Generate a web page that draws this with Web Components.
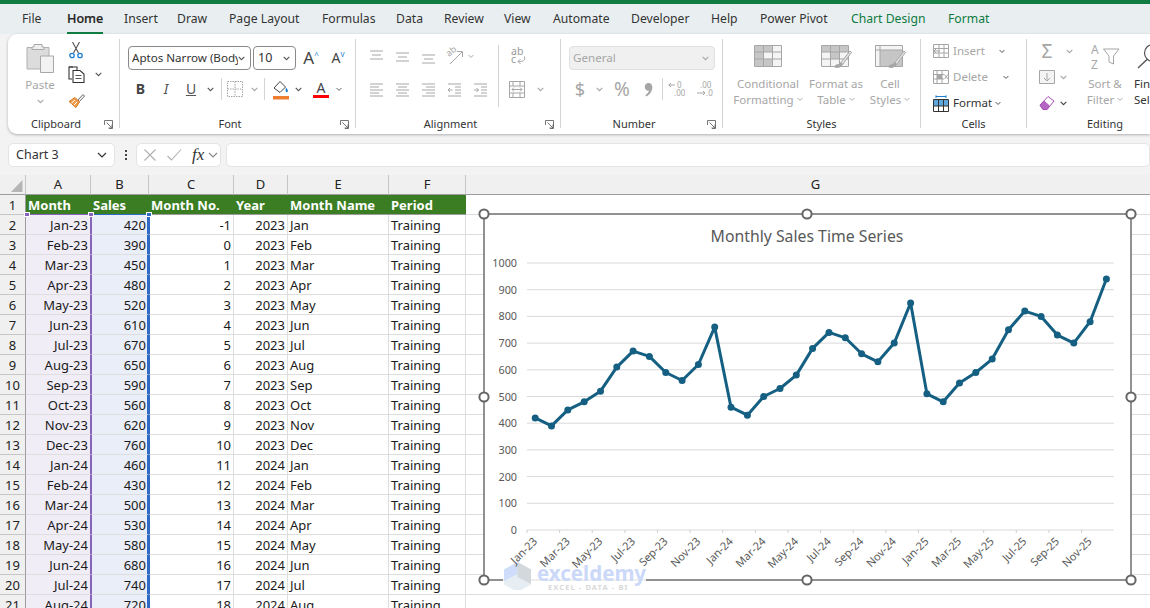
<!DOCTYPE html>
<html lang="en"><head><meta charset="utf-8"><title>Excel</title>
<style>
html,body{margin:0;padding:0;width:1150px;height:608px;overflow:hidden;background:#f3f3f3;font-family:"Noto Sans","Open Sans",sans-serif}
</style></head><body>
<x-tabs></x-tabs>
<x-ribbon></x-ribbon>
<x-formula></x-formula>
<x-sheet></x-sheet>
<script>
const G='#a6a6a6',D='#404040';
const chev=(c='#555',w=7)=>`<svg width="${w}" height="5" viewBox="0 0 7 5" fill="none" stroke="${c}" stroke-width="1.1"><path d="M.7 .8 3.5 3.6 6.3 .8"/></svg>`;
const svg=(w,h,b)=>`<svg width="${w}" height="${h}" viewBox="0 0 ${w} ${h}" fill="none">${b}</svg>`;
const I={
 paste:svg(28,30,`<path d="M1 4.5H23V26H1Z" fill="#dcdcdc" stroke="#b0b0b0"/><path d="M8 4V1.5H16V4H18V6.5H6V4Z" fill="#f0f0f0" stroke="#a8a8a8"/><path d="M14.5 13H27.5V29.5H14.5Z" fill="#f2f2f2" stroke="#a8a8a8"/>`),
 cut:svg(14,17,`<path d="M3.5 0 9.5 11M10.5 0 4.5 11" stroke="#555" stroke-width="1.1"/><circle cx="3" cy="13.5" r="2.2" stroke="#1f7fd1" stroke-width="1.3"/><circle cx="11" cy="13.5" r="2.2" stroke="#1f7fd1" stroke-width="1.3"/>`),
 copy:svg(17,17,`<path d="M5 1H1V13H4" stroke="#333" stroke-width="1.1"/><path d="M1 1H9V4" stroke="#333" stroke-width="1.1"/><path d="M5 4.5H12L16 8V16.5H5Z" fill="#fff" stroke="#333" stroke-width="1.1"/><path d="M7.5 9.5H13.5M7.5 12.5H13.5" stroke="#555"/>`),
 brush:svg(17,16,`<path d="M10 8 15 2.5 16.5 4 11.5 9.5Z" fill="#fff" stroke="#666"/><path d="M1 9.5 7 5.5 11.5 10 8 15.5Z" fill="#ed9b4c" stroke="#d87a22"/><path d="M3.5 11 7 8M6 13 9 10" stroke="#fff"/>`),
 borders:svg(16,16,`<path d="M.5 .5H15.5V15.5H.5ZM8 .5V15.5M.5 8H15.5" stroke="${G}" stroke-dasharray="1.5 1"/>`),
 fill:svg(18,21,`<path d="M2 9 8 2.5 13.5 8 8 13.5Z" fill="#fff" stroke="#444"/><path d="M14 8.5C16 10.5 16.5 12 15.3 13 14 13.8 13 12.5 14 8.5Z" fill="#1f7fd1"/><path d="M1 17H17V20.5H1Z" fill="#ed7d31"/>`),
 orient:svg(20,18,`<text x="4" y="9" font-size="9" fill="${G}" font-family="Noto Sans" transform="rotate(-40 6 8)">ab</text><path d="M6 17 18 5M13 4.5H18.5V10" stroke="${G}"/>`),
 wrap:svg(18,18,`<text x="2" y="8" font-size="10.5" fill="#999" font-family="Noto Sans">ab</text><text x="2" y="16" font-size="10.5" fill="#999" font-family="Noto Sans">c</text><path d="M15.5 9.5C16.5 14 14 14.5 9 14.5M11.5 12 9 14.5 11.5 17" stroke="${G}"/>`),
 merge:svg(16,17,`<path d="M.5 .5H15.5V16.5H.5ZM.5 5H15.5M.5 12H15.5M4 .5V5M11 .5V5M4 12V16.5M11 12V16.5" stroke="${G}"/><path d="M3 8.5H13M5 6.5 3 8.5 5 10.5M11 6.5 13 8.5 11 10.5" stroke="${G}"/>`),
 dec1:svg(17,16,`<text x="9" y="7" font-size="8" fill="${G}" font-family="Noto Sans">0</text><text x="6" y="15" font-size="8" fill="${G}" font-family="Noto Sans">.00</text><path d="M7 4H.8M3 2 .8 4 3 6" stroke="${G}"/>`),
 dec2:svg(17,16,`<text x="4" y="7" font-size="8" fill="${G}" font-family="Noto Sans">.00</text><text x="10" y="15" font-size="8" fill="${G}" font-family="Noto Sans">.0</text><path d="M1 12H9M7 10 9 12 7 14" stroke="${G}"/>`),
 comma:svg(9,15,`<path d="M4.5 1C7 1 8.3 2.8 8.3 5.2 8.3 9 6 12.5 2.3 14.5L1.4 13.2C3.4 11.8 4.6 10.3 5 8.6 2.6 9 .8 7.3.8 5 .8 2.6 2.4 1 4.5 1Z" fill="${G}"/>`),
 cf:svg(29,22,`<path d="M.5 .5H27.5V21.5H.5Z" fill="#f4f4f4" stroke="${G}"/><path d="M1 1H18V7H1ZM1 7H9V14H1ZM1 14H19V21H1Z" fill="#c6c6c6"/><path d="M.5 7H27.5M.5 14H27.5M9.5 .5V21.5M18.5 .5V21.5" stroke="${G}"/>`),
 ft:svg(31,24,`<path d="M.5 .5H27.5V21.5H.5Z" fill="#f4f4f4" stroke="${G}"/><path d="M1 1H27V7H1ZM9 7H18V14H9Z" fill="#c6c6c6"/><path d="M.5 7H27.5M.5 14H27.5M9.5 .5V21.5M18.5 .5V21.5" stroke="${G}"/><path d="M15 20C20 20 20 17 22 15L29 6 30.5 7.5 24 16C22 20 19 23 14 22Z" fill="#e4e4e4" stroke="${G}"/><path d="M14 20.5C17 20 18 19 20 17L22 19C19 23 17 23.5 13 22Z" fill="#a6a6a6"/>`),
 cs:svg(31,24,`<path d="M.5 .5H27.5V21.5H.5Z" fill="#f4f4f4" stroke="${G}"/><path d="M5 5H27V21H5Z" fill="#c6c6c6"/><path d="M.5 5H27.5M5 .5V21.5" stroke="${G}"/><path d="M15 20C20 20 20 17 22 15L29 6 30.5 7.5 24 16C22 20 19 23 14 22Z" fill="#e4e4e4" stroke="${G}"/><path d="M14 20.5C17 20 18 19 20 17L22 19C19 23 17 23.5 13 22Z" fill="#a6a6a6"/>`),
 ins:svg(16,14,`<path d="M.5 .5H15.5V13.5H.5ZM.5 4.5H15.5M.5 9H15.5M6 .5V13.5M11 .5V13.5" stroke="${G}"/><path d="M1 7H7M3.5 4.5 1 7 3.5 9.5" stroke="${G}" fill="#fff"/>`),
 del:svg(16,14,`<path d="M.5 .5H15.5V13.5H.5ZM.5 4.5H11M.5 9H11M4 .5V13.5M9 .5V13.5" stroke="${G}"/><path d="M4 4.5H9V9H4Z" fill="#a6a6a6"/><path d="M11.5 4.5 15 9M15 4.5 11.5 9" stroke="${G}"/>`),
 fmt:svg(16,17,`<path d="M.5 4.5H15.5V16.5H.5Z" fill="#fff" stroke="#333"/><path d="M1 5H15V11H1Z" fill="#5fa8de"/><path d="M.5 11H15.5M5.5 4.5V16.5M10.5 4.5V16.5" stroke="#333"/><path d="M3 1.5H13M3 .3V3M13 .3V3" stroke="#1f7fd1"/>`),
 filld:svg(16,14,`<path d="M.5 .5H15.5V13.5H.5Z" fill="#f4f4f4" stroke="${G}"/><path d="M8 3V11M5 8 8 11 11 8" stroke="${G}"/>`),
 erase:svg(16,16,`<path d="M1 10 9 1.5 15 6 8 14.5H4Z" fill="#fff" stroke="#a94fb5"/><path d="M1 10 5 6 10.5 11 8 14.5H4Z" fill="#b565c4" stroke="#a94fb5"/>`),
 sort:svg(29,27,`<text x="0" y="11" font-size="12" fill="${G}" font-family="Noto Sans">A</text><text x="0" y="26" font-size="12" fill="${G}" font-family="Noto Sans">Z</text><path d="M12.5 6H28L22.5 13V21L18 19V13Z" fill="#fff" stroke="${G}"/>`),
 find:svg(26,28,`<circle cx="16" cy="10" r="8.5" stroke="#555" stroke-width="1.2" fill="#fff"/><path d="M10 16.5 1 25" stroke="#555" stroke-width="1.4"/>`),
 launch:svg(9,9,`<path d="M.5 5V.5H8.5V8.5H5M2.5 2.5 8 8M8 4.5V8H4.5" stroke="#666" stroke-width=".9"/>`),
};

class XTabs extends HTMLElement{constructor(){super();const s=this.attachShadow({mode:'open'});
 const t=[['File',45],['Home',57,'on'],['Insert',53],['Draw',52],['Page Layout',93],['Formulas',74],['Data',48],['Review',60],['View',49],['Automate',78],['Developer',80],['Help',49],['Power Pivot',91],['Chart Design',97,'gr'],['Format',41,'gr']];
 s.innerHTML=`<style>:host{display:flex;box-sizing:border-box;height:34px;border-top:4px solid #107c41;background:#e9eff1;padding-left:22px;font:12.2px/30px "Noto Sans",sans-serif;color:#333}
 .t{display:block;flex:none;height:30px;white-space:nowrap}.t span{display:inline-block;height:30px;box-sizing:border-box}
 .on span{font-size:12.6px;color:#222;font-weight:500;border-bottom:2px solid #107c41;-webkit-text-stroke:.2px #222}.gr{color:#0e7a3e}</style>`+t.map(a=>`<div class="t ${a[2]||''}" style="width:${a[1]}px"><span>${a[0]}</span></div>`).join('');}}
customElements.define('x-tabs',XTabs);

class RGroup extends HTMLElement{constructor(){super();this.attachShadow({mode:'open'});}
 connectedCallback(){const w=this.getAttribute('w'),l=this.getAttribute('label'),p=this.hasAttribute('launcher');
 this.shadowRoot.innerHTML=`<style>:host{display:flex;flex-direction:column;box-sizing:border-box;flex:none;height:89px;width:${w}px;border-right:1px solid #d4d4d4}
 .c{height:75px;flex:none}.f{display:flex;height:14px;line-height:20px;font-size:11px;color:#333}.l{flex:1;text-align:center}
 .p{width:15px;padding-top:6px;box-sizing:border-box;line-height:0}</style><div class="c"><slot></slot></div><div class="f"><span class="l">${l}</span>${p?`<span class="p">${I.launch}</span>`:''}</div>`;}}
customElements.define('r-group',RGroup);

class XRibbon extends HTMLElement{constructor(){super();const s=this.attachShadow({mode:'open'});
 const c=(w,h,st='')=>`<span class="k" style="width:${w}px;${st}">${h}</span>`;
 const t=(x,st='')=>`<span style="font-size:15px;color:${G};${st}">${x}</span>`;
 const ln=(a)=>svg(15,15,a.map((g,i)=>`<path d="M${g[0]} ${g[1]}H${g[2]}" stroke="${G}"/>`).join(''));
 const big=(w,ic,a,b)=>`<div class="big" style="width:${w}px"><div class="bi">${ic}</div><div>${a}</div><div class="b2">${b} ${chev(G,6)}</div></div>`;
 s.innerHTML=`<style>:host{display:flex;box-sizing:border-box;width:1142px;height:100px;margin-left:8px;padding-top:5px;overflow:hidden;background:#fff;border-radius:9px 0 0 9px;box-shadow:0 1px 3px rgba(0,0,0,.28);font:11.5px/16px "Noto Sans",sans-serif;color:${G}}
 .row{display:flex;align-items:center;height:22px}.k{display:flex;align-items:center;justify-content:center;flex:none;height:100%}
 .sep{flex:none;width:1px;background:#d4d4d4}.hsep{width:1px;height:22px;background:#d4d4d4;flex:none}
 .sel{box-sizing:border-box;display:flex;align-items:center;height:24px;border:1px solid #8a8a8a;border-radius:4px;padding:0 5px 0 3px;color:#333;font-size:11.6px;overflow:hidden;white-space:nowrap;flex:none}
 .sel b{font-weight:400;overflow:hidden;flex:1}.dark{color:#333}
 .big{text-align:center;flex:none;line-height:16px;white-space:nowrap}.bi{height:37px;padding-top:6px;box-sizing:border-box;line-height:0}.b2 svg{vertical-align:2px}
 .flex{display:flex}.tall{height:24px;display:flex;align-items:center;margin-bottom:2px;white-space:nowrap}</style>

 <r-group w="112" label="Clipboard" launcher><div class="flex">
  <div style="margin-left:14px;width:36px;text-align:center;padding-top:4px"><div style="line-height:0">${I.paste}</div><div style="margin-top:4px">Paste</div><div style="line-height:0;margin-top:6px">${chev(G)}</div></div>
  <div style="margin-left:3px"><div class="row" style="width:50px"><span class="k" style="width:30px">${I.cut}</span></div><div class="row" style="height:26px">${c(30,I.copy)}${c(14,chev(),'margin-left:0')}</div><div class="row" style="height:25px">${c(30,I.brush)}</div></div>
 </div></r-group>

 <r-group w="236" label="Font" launcher><div style="padding:7px 0 0 8px">
  <div class="row" style="height:24px"><span class="sel" style="width:123px"><b>Aptos Narrow (Body)</b>${chev()}</span><span class="sel" style="width:43px;margin-left:2px;padding-left:4px"><b style="font-size:12.5px">10</b>${chev()}</span>
   ${c(36,`<span style="font-size:17px;color:#444">A<sup style="font-size:8px;color:#1f7fd1;vertical-align:6px;line-height:0">^</sup></span>`,'margin-left:-3px')}${c(16,`<span style="font-size:14px;color:#444">A</span><span style="font-size:8px;color:#1f7fd1;margin-top:-8px">v</span>`,'margin-left:1px')}</div>
  <div class="row" style="margin-top:8px;color:#444">${c(25,`<b style="font-size:14px">B</b>`)}${c(26,`<i style="font-size:14px;color:#555">I</i>`)}${c(24,`<u style="font-size:14px;color:#555">U</u>`)}${c(14,chev())}${c(8,'')}
   <span class="hsep" style="margin-left:-4px;margin-right:3px"></span>${c(20,I.borders)}${c(18,chev(G))}<span class="hsep" style="margin-left:1px;margin-right:3px"></span>${c(25,I.fill)}${c(10,chev())}
   ${c(30,`<span style="display:flex;flex-direction:column;align-items:center;font-size:14px;line-height:15px;color:#444">A<span style="width:16px;height:3.5px;background:#f00"></span></span>`,'margin-left:3px')}${c(6,chev())}</div>
 </div></r-group>

 <r-group w="205" label="Alignment" launcher><div class="flex" style="padding:6px 0 0 7px">
  <div style="width:135px">
   <div class="row">${c(26,ln([[1,2,14],[3,6,12],[1,10,14]]))}${c(26,ln([[1,4,14],[3,8,12],[1,12,14]]))}${c(26,ln([[1,6,14],[3,10,12],[1,14,14]]))}${c(26,I.orient)}${c(8,chev(G,6))}</div>
   <div class="row" style="margin-top:11px">${c(26,ln([[1,2,14],[1,5,10],[1,8,14],[1,11,10],[1,14,14]]))}${c(26,ln([[1,2,14],[3,5,12],[1,8,14],[3,11,12],[1,14,14]]))}${c(26,ln([[1,2,14],[5,5,14],[1,8,14],[5,11,14],[1,14,14]]))}${c(26,svg(15,15,`<path d="M1 2H14M8 5H14M8 8H14M8 11H14M1 14H14M5.5 8H1M3 6 1 8 3 10" stroke="${G}"/>`))}${c(26,svg(15,15,`<path d="M1 2H14M8 5H14M8 8H14M8 11H14M1 14H14M1 8H5.5M3.5 6 5.5 8 3.5 10" stroke="${G}"/>`))}</div>
  </div>
  <div class="sep" style="height:62px"></div>
  <div><div class="row">${c(38,I.wrap)}</div><div class="row" style="margin-top:11px">${c(36,I.merge)}${c(10,chev(G))}</div></div>
 </div></r-group>

 <r-group w="162" label="Number" launcher><div style="padding:7px 0 0 8px">
  <div class="sel" style="width:146px;background:#f0f0f0;border-color:#e0e0e0;color:${G}"><b>General</b>${chev(G)}</div>
  <div class="row" style="margin-top:8px">${c(22,t('$','font-size:18px'))}${c(16,chev(G))}${c(30,t('%','font-size:19px'))}${c(22,I.comma)}${c(6,'<span class="hsep"></span>')}${c(22,I.dec1)}${c(34,I.dec2)}</div>
 </div></r-group>

 <r-group w="198" label="Styles"><div class="flex" style="padding-left:9px">
  ${big(72,I.cf,'Conditional','Formatting')}${big(64,I.ft,'Format as','Table')}${big(44,I.cs,'Cell','Styles')}
 </div></r-group>

 <r-group w="106" label="Cells"><div style="padding-left:12px">
  <div class="tall">${I.ins}<span style="margin-left:4px;width:46px">Insert</span>${chev('#444',6)}</div>
  <div class="tall">${I.del}<span style="margin-left:4px;width:50px">Delete</span>${chev('#444',6)}</div>
  <div class="tall dark">${I.fmt}<span style="margin-left:4px;width:42px">Format</span>${chev('#444',6)}</div>
 </div></r-group>

 <r-group w="156" label="Editing" style="border:0"><div class="flex" style="padding-left:10px">
  <div style="width:45px;flex:none">
   <div class="tall"><span class="k" style="width:20px;font-size:19px">Σ</span><span style="margin-left:9px;line-height:0">${chev(G)}</span></div>
   <div class="tall"><span class="k" style="width:20px">${I.filld}</span><span style="margin-left:3px;line-height:0">${chev(G)}</span></div>
   <div class="tall"><span class="k" style="width:20px">${I.erase}</span><span style="margin-left:3px;line-height:0">${chev('#444')}</span></div>
  </div>
  <div class="big" style="width:46px;margin-top:-1px"><div class="bi" style="padding-top:5px;height:38px">${I.sort}</div><div>Sort &amp;</div><div class="b2">Filter ${chev(G,6)}</div></div>
  <div class="big dark" style="width:60px;text-align:left;padding-left:6px;margin-top:-1px"><div class="bi" style="padding:5px 0 0 3px;height:38px">${I.find}</div><div>Find &amp;</div><div>Select</div></div>
 </div></r-group>`;}}
customElements.define('x-ribbon',XRibbon);

class XFormula extends HTMLElement{constructor(){super();const s=this.attachShadow({mode:'open'});
 s.innerHTML=`<style>:host{display:flex;align-items:stretch;height:24px;margin:9px 0 8px 8px;font:12.5px/22px "Noto Sans",sans-serif;color:#333}
 .b{box-sizing:border-box;background:#fff;border:1px solid #e4e4e4;border-radius:5px;display:flex;align-items:center;flex:none}
 .n{width:107px;padding:0 7px 0 7px}.n span{flex:1}.d{width:21px;flex:none;display:flex;flex-direction:column;align-items:center;justify-content:center;gap:2px}.d i{width:2px;height:2px;background:#444;display:block}
 .x{width:85px;padding-left:7px}.i{margin-left:5px;width:924px}</style>
 <div class="b n"><span>Chart 3</span><svg width="10" height="6" viewBox="0 0 10 6" fill="none" stroke="#333" stroke-width="1.2"><path d="M1 1 5 5 9 1"/></svg></div>
 <div class="d"><i></i><i></i><i></i></div>
 <div class="b x"><svg width="12" height="12" viewBox="0 0 12 12" stroke="#b0b0b0" stroke-width="1.1" fill="none"><path d="M.5 .5 11.5 11.5M11.5 .5 .5 11.5"/></svg>
 <svg style="margin-left:11px" width="15" height="12" viewBox="0 0 15 12" stroke="#b0b0b0" stroke-width="1.1" fill="none"><path d="M.5 7 4.5 11 14 .5"/></svg>
 <span style="margin-left:10px;font:italic 400 17px 'Liberation Serif',serif;color:#333">fx</span><svg style="margin-left:4px" width="10" height="6" viewBox="0 0 10 6" fill="none" stroke="#888" stroke-width="1.1"><path d="M1 1 5 5 9 1"/></svg></div>
 <div class="b i"></div>`;}}
customElements.define('x-formula',XFormula);

const SALES=[420,390,450,480,520,610,670,650,590,560,620,760,460,430,500,530,580,680,740,720,660,630,700,850,510,480,550,590,640,750,820,800,730,700,780,940];
class XChart extends HTMLElement{constructor(){super();const s=this.attachShadow({mode:'open'});
 const X=i=>535.2+i*16.32,Y=v=>530-v*.267;
 const F=`font-family="Noto Sans,sans-serif"`;
 let g='';for(let v=0;v<=1000;v+=100){g+=`<path d="M527 ${Y(v)}H1114" stroke="#d9d9d9"/><text x="517" y="${Y(v)+4}" text-anchor="end" font-size="10.8" fill="#595959" ${F}>${v}</text>`;}
 const mon=['Jan','Mar','May','Jul','Sep','Nov'];let lab='',tk='';
 for(let i=0;i<18;i++){const x=527+i*32.62,n=mon[i%6]+'-'+(23+Math.floor(i/6));
  tk+=`<path d="M${x} 530V533" stroke="#d0d0d0"/>`;
  lab+=`<text transform="translate(${x+11} 542) rotate(-45)" text-anchor="end" font-size="11" fill="#595959" ${F}>${n}</text>`;}
 const pts=SALES.map((v,i)=>`${X(i).toFixed(1)},${Y(v).toFixed(1)}`).join(' ');
 const dots=SALES.map((v,i)=>`<circle cx="${X(i).toFixed(1)}" cy="${Y(v).toFixed(1)}" r="3.5" fill="#156082"/>`).join('');
 const h=[[484,214],[807,214],[1131,214],[484,397],[1131,397],[484,580],[807,580],[1131,580]].map(p=>`<circle cx="${p[0]}" cy="${p[1]}" r="4.6" fill="#fff" stroke="#666" stroke-width="2"/>`).join('');
 s.innerHTML=`<style>:host{display:block;position:absolute;left:474px;top:29px;width:667px;height:386px}svg{display:block}</style>
 <svg width="667" height="386" viewBox="474 204 667 386">
 <rect x="484" y="214" width="647" height="366" fill="#fff"/>
 <text x="807" y="242" text-anchor="middle" font-size="15.8" fill="#595959" ${F}>Monthly Sales Time Series</text>
 ${g}${tk}<polyline points="${pts}" fill="none" stroke="#156082" stroke-width="3" stroke-linejoin="round"/>${dots}
 <rect x="484" y="214" width="647" height="366" fill="none" stroke="#6e6e6e" stroke-width="1.5"/>
 <rect x="503" y="561" width="143" height="32" fill="#fff" opacity=".85"/>
 <path d="M517.5 562 531 569.5V584.5L517.5 592 504 584.5V569.5Z" fill="#e6eef4"/><path d="M517.5 562V574L504 581V569.5Z" fill="#cfdcfa"/><path d="M517.5 562 531 569.5V584L517.5 577Z" fill="#d3d8dc"/>
 <text x="537" y="581" font-size="20.5" font-weight="700" fill="#cbd8f8" ${F}>exceldemy</text>
 <text x="548" y="589.5" font-size="7.5" font-weight="700" letter-spacing="1.1" fill="#d9d9d9" ${F}>EXCEL - DATA - BI</text>
 ${lab}${h}</svg>`;}}
customElements.define('x-chart',XChart);

class XSheet extends HTMLElement{constructor(){super();const s=this.attachShadow({mode:'open'});
 const M=['Jan','Feb','Mar','Apr','May','Jun','Jul','Aug','Sep','Oct','Nov','Dec'];
 let h=`<div class="ch corner"><svg width="26" height="20" viewBox="0 0 26 20"><path d="M22.5 5V17H11Z" fill="#b5b5b5"/></svg></div>`+['A','B','C','D','E','F','G'].map(c=>`<div class="ch">${c}</div>`).join('');
 h+=`<div class="rh">1</div>`+['Month','Sales','Month No.','Year','Month Name','Period'].map((t,i)=>`<div class="hd ${i==0?'pu':i==1?'bl':''}">${t}</div>`).join('')+`<div class="c"></div>`;
 for(let r=0;r<21;r++){const i=r,y=23+Math.floor(i/12),mm=M[i%12],sal=SALES[i];
  h+=`<div class="rh">${r+2}</div><div class="c ca r">${mm}-${y}</div><div class="c cb r">${sal}</div><div class="c cc r">${i-1}</div><div class="c r">${2000+y}</div><div class="c">${mm}</div><div class="c">Training</div><div class="c"></div>`;}
 s.innerHTML=`<style>:host{display:grid;position:relative;height:433px;overflow:hidden;background:#fff;grid-template-columns:26px 65px 58px 85px 54px 101px 77px 700px;grid-auto-rows:20px;font:13px/19px "Noto Sans",sans-serif;color:#1a1a1a}
 div{box-sizing:border-box;white-space:nowrap;overflow:hidden}
 .ch{background:#f0f0f0;border-right:1px solid #c6c6c6;border-bottom:1px solid #9c9c9c;text-align:center;color:#222}
 .corner{line-height:0}
 .rh{background:#f0f0f0;border-right:1px solid #9c9c9c;border-bottom:1px solid #c6c6c6;text-align:center;color:#222;line-height:21px}
 .hd{background:#3b7d23;color:#fff;font-weight:700;padding-left:2px;border-bottom:1px solid #9c9c9c;line-height:21px}
 .hd.pu{border-bottom:1px solid #8764b8}.hd.bl{border-bottom:1px solid #2f6bc4}
 .c{border-right:1px solid #dedede;border-bottom:1px solid #dedede;padding:0 2px;line-height:21px}
 .r{text-align:right}.ca{background:#f1edf7;border-right:1px solid #8764b8;padding-right:2px}.cb{background:#e9eef8;border-left:1px solid #8764b8;border-right:2px solid #2f6bc4;padding-right:1px}
 .cc{border-left:1px solid #2f6bc4}
 .hn{position:absolute;width:6px;height:5px;top:37px;box-sizing:border-box;border:1px solid #fff}</style>${h}
 <div class="hn" style="left:24px;background:#8764b8"></div><div class="hn" style="left:88px;background:#8764b8"></div><div class="hn" style="left:146px;background:#2f6bc4"></div>
 <x-chart></x-chart>`;}}
customElements.define('x-sheet',XSheet);
</script></body></html>
